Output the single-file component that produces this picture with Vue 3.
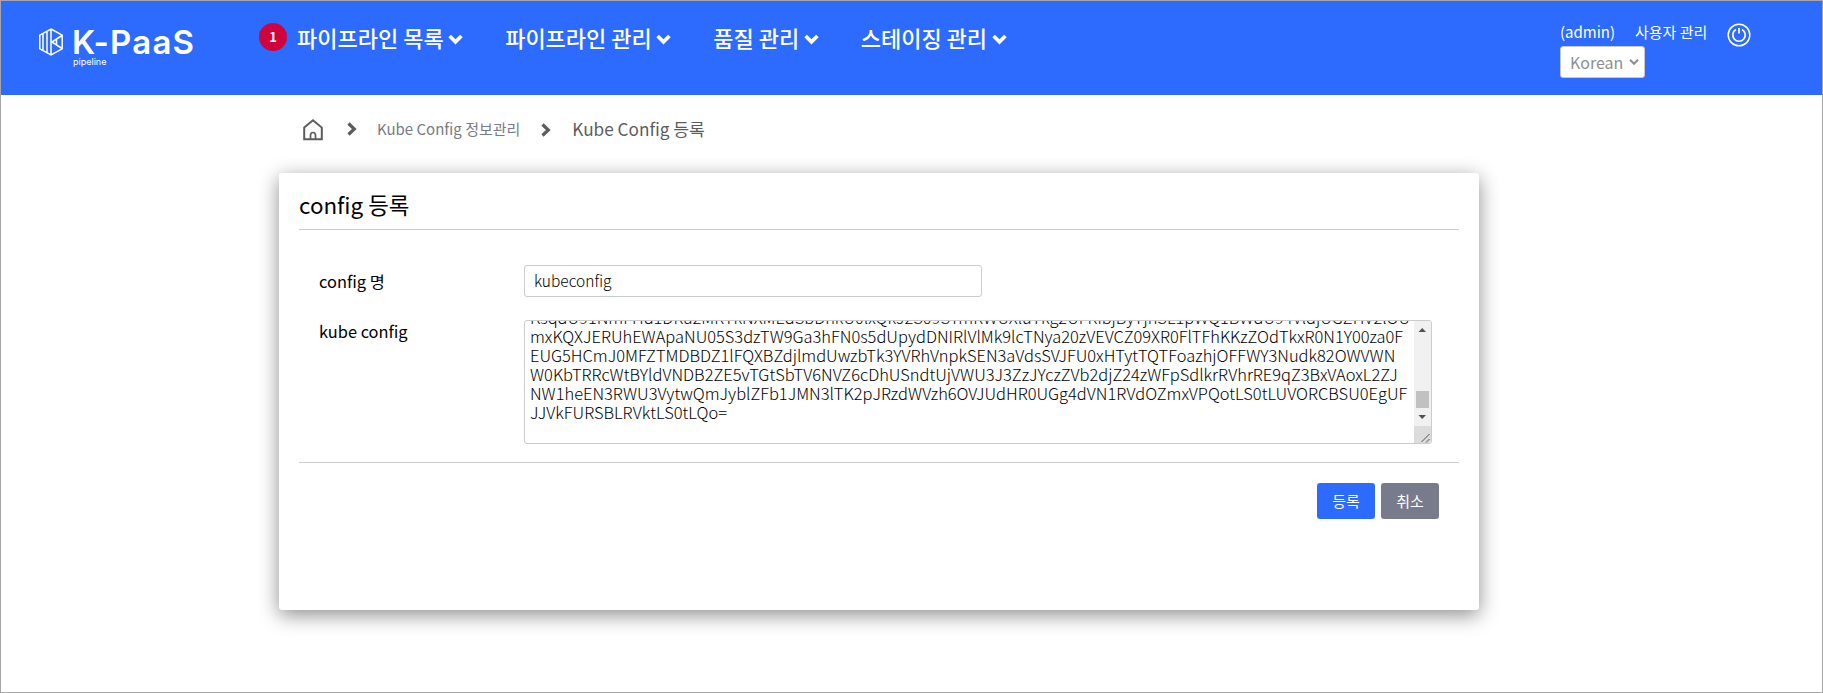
<script setup>
const menu = ['파이프라인 목록', '파이프라인 관리', '품질 관리', '스테이징 관리']
const lines = [
  'KsqdU91NmFHd1DRa2MRTkNXMEdSbDhkU0lxQkJ2S09STmRWUXluTkg2UFRibjByTjhSL1pWQ1BWdU94VldjUGZHV2lOU',
  'mxKQXJERUhEWApaNU05S3dzTW9Ga3hFN0s5dUpydDNIRlVlMk9lcTNya20zVEVCZ09XR0FlTFhKKzZOdTkxR0N1Y00za0F',
  'EUG5HCmJ0MFZTMDBDZ1lFQXBZdjlmdUwzbTk3YVRhVnpkSEN3aVdsSVJFU0xHTytTQTFoazhjOFFWY3Nudk82OWVWN',
  'W0KbTRRcWtBYldVNDB2ZE5vTGtSbTV6NVZ6cDhUSndtUjVWU3J3ZzJYczZVb2djZ24zWFpSdlkrRVhrRE9qZ3BxVAoxL2ZJ',
  'NW1heEN3RWU3VytwQmJyblZFb1JMN3lTK2pJRzdWVzh6OVJUdHR0UGg4dVN1RVdOZmxVPQotLS0tLUVORCBSU0EgUF',
  'JJVkFURSBLRVktLS0tLQo='
]
</script>

<template>
  <div class="page">
    <header class="header">
      <div class="logo">
        <svg class="mark" width="26" height="30" viewBox="0 0 26 30">
          <path d="M13 2 24.200 8.200V21.800L13 28 1.800 21.800V8.200Z M13 2V28 M5 7V23 M9 5V25.500 M14 15 24 8.500 M14 15 24 21.500 M18.500 12.500V18" fill="none" stroke="#fff" stroke-width="1.500" />
        </svg>
        <div class="brand">
          <div class="name">K-PaaS</div>
          <div class="sub">pipeline</div>
        </div>
      </div>
      <span class="badge">1</span>
      <nav class="nav">
        <a v-for="m in menu" :key="m" class="nav-item">
          <span>{{ m }}</span>
          <svg width="15" height="11" viewBox="0 0 14 10"><path d="M1.500 1.700 7 7.200l5.500-5.500" fill="none" stroke="#fff" stroke-width="3.400" /></svg>
        </a>
      </nav>
      <div class="user">
        <div class="user-row">
          <span class="admin">(admin)</span>
          <span class="manage">사용자 관리</span>
          <svg class="power" width="24" height="24" viewBox="0 0 24 24" fill="none" stroke="#fff">
            <circle cx="12" cy="12" r="10.800" stroke-width="1.500" />
            <path d="M9 6.600a6.200 6.200 0 1 0 6 0M12 5v5.500" stroke-width="1.700" />
          </svg>
        </div>
        <div class="select">
          <span>Korean</span>
          <svg width="10" height="8" viewBox="0 0 10 8"><path d="M1 1.800 5 5.800l4-4" fill="none" stroke="#8f8f8f" stroke-width="2" /></svg>
        </div>
      </div>
    </header>

    <div class="crumbs">
      <svg class="home" width="20" height="22" viewBox="0 0 20 22" fill="none" stroke="#5c5c5c">
        <path d="M1.200 8.600 10 1.300l8.800 7.300V20.200H1.200Z" stroke-width="2" />
        <path d="M7.500 20v-3.500a2.500 3 0 0 1 5 0V20" stroke-width="1.700" />
      </svg>
      <svg class="sep1" width="10" height="14" viewBox="0 0 10 14"><path d="M1.500 1.500 7.300 7l-5.800 5.500" fill="none" stroke="#5c5c5c" stroke-width="3.200" /></svg>
      <span class="crumb">Kube Config 정보관리</span>
      <svg class="sep2" width="10" height="14" viewBox="0 0 10 14"><path d="M1.500 1.500 7.300 7l-5.800 5.500" fill="none" stroke="#5c5c5c" stroke-width="3.200" /></svg>
      <span class="current">Kube Config 등록</span>
    </div>

    <main class="card">
      <h1 class="title">config 등록</h1>
      <div class="form">
        <label class="label">config 명</label>
        <div class="input">kubeconfig</div>
        <label class="label second">kube config</label>
        <div class="textarea">
          <div class="code"><div v-for="l in lines" :key="l">{{ l }}</div></div>
          <svg class="scroll" width="17" height="122" viewBox="0 0 17 122">
            <path d="M0 0H17V105H0Z" fill="#f1f1f1" />
            <path d="M4.500 11H12L8.200 7Z" fill="#505050" />
            <path d="M2 70H15V87H2Z" fill="#c1c1c1" />
            <path d="M4.500 94H12L8.200 98Z" fill="#505050" />
            <path d="M0 105H17V122H0Z" fill="#dcdcdc" />
            <path d="M7.500 121 15.500 113M12 121.500 15.500 118" stroke="#505050" stroke-width="1" />
          </svg>
        </div>
      </div>
      <div class="actions">
        <button class="btn primary">등록</button>
        <button class="btn">취소</button>
      </div>
    </main>
  </div>
</template>

<style>
body { margin: 0; }
</style>

<style scoped>
.page { box-sizing: border-box; width: 1823px; height: 693px; border: 1px solid #a6a6a6; background: #fff; overflow: hidden; font-family: "Noto Sans CJK KR", "Noto Sans", sans-serif; color: #000; }
.header { height: 94px; background: #2d6bff; color: #fff; display: flex; align-items: flex-start; }
.logo { display: flex; width: 221px; padding: 26px 0 0 37px; box-sizing: border-box; }
.mark { flex: none; }
.brand { margin-left: 9px; }
.name { font: 600 33px/32px Inter, sans-serif; letter-spacing: 1.200px; margin: -1px 0 0 -1px; white-space: nowrap; }
.sub { font: 400 9px/10px Inter, sans-serif; margin-top: -1px; }
.badge { width: 28px; height: 28px; margin: 22px 0 0 37px; border-radius: 50%; background: #d0043c; font-weight: 700; font-size: 13px; line-height: 28px; text-align: center; }
.nav { display: flex; margin: 21px 0 0 10px; gap: 42px; }
.nav-item { display: flex; align-items: center; gap: 4.500px; font-weight: 500; font-size: 22px; line-height: 30px; white-space: nowrap; }
.nav-item svg { margin-top: 4px; }
.user { width: 262px; margin-left: auto; padding-top: 21px; }
.user-row { display: flex; height: 24px; font-size: 15px; line-height: 20px; }
.admin { width: 75px; }
.power { margin: 1px 0 0 20px; }
.select { box-sizing: border-box; width: 85px; height: 32px; border: 1px solid #c8c8c8; border-radius: 3px; background: #fff; color: #8f8f8f; font-size: 16px; line-height: 30px; padding: 0 5px 0 9px; display: flex; align-items: center; justify-content: space-between; }
.crumbs { display: flex; align-items: center; height: 28px; margin: 20px 0 0 302px; color: #5c5c5c; }
.home { margin-top: 1px; }
.sep1 { margin-left: 24px; }
.crumb { margin: -1px 0 0 20px; font-size: 15px; color: #777b87; }
.sep2 { margin: 2px 0 0 21px; }
.current { margin: -1px 0 0 21px; font-size: 17.200px; }
.card { box-sizing: border-box; width: 1200px; height: 437px; margin: 30px 0 0 278px; padding: 0 20px; border-radius: 3px; box-shadow: 0 5px 20px rgba(0, 0, 0, .45); }
.title { margin: 0; height: 56px; border-bottom: 1px solid #ccc; font-size: 22.400px; font-weight: 400; line-height: 62px; }
.form { display: grid; grid-template-columns: 205px 908px; grid-template-rows: 32px 124px; row-gap: 23px; margin-top: 35px; padding: 0 20px 18px; border-bottom: 1px solid #ccc; }
.label { font-size: 16.400px; line-height: 32px; font-weight: 400; }
.second { line-height: 22px; }
.input { box-sizing: border-box; width: 458px; border: 1px solid #ccc; border-radius: 3px; padding-left: 9px; font-size: 15.500px; line-height: 29px; font-weight: 300; }
.textarea { box-sizing: border-box; display: flex; justify-content: space-between; height: 124px; border: 1px solid #ccc; border-radius: 3px; overflow: hidden; }
.code { margin-top: -13px; padding-left: 5px; font-size: 16.440px; line-height: 19px; font-weight: 300; white-space: pre; }
.scroll { flex: none; }
.actions { display: flex; justify-content: flex-end; gap: 6px; padding: 20px 20px 0; }
.btn { width: 58px; height: 36px; padding: 0 0 2px; border: 0; border-radius: 3px; background: #777b8c; color: #fff; font: 400 15px "Noto Sans CJK KR", sans-serif; }
.primary { background: #2d6bff; }
</style>
